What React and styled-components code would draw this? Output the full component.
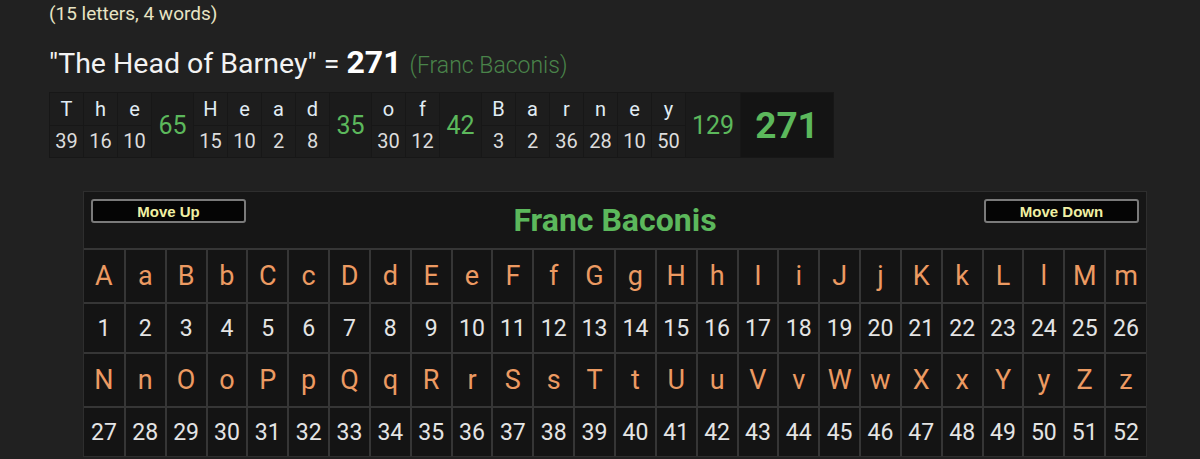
import React from "react";
import styled, { createGlobalStyle } from "styled-components";

const GlobalStyle = createGlobalStyle`
  html, body {
    margin: 0;
    padding: 0;
    background: #212121;
  }
  body {
    font-family: Roboto, "Noto Sans", "Liberation Sans", sans-serif;
    color: #e6e6e6;
  }
`;

const Page = styled.div`
  width: 1200px;
  height: 459px;
  overflow: hidden;
  padding: 2px 0 0 49px;
  box-sizing: border-box;
`;

const Count = styled.div`
  font-size: 19px;
  line-height: 24px;
  color: #e8e4c4;
`;

const Equation = styled.div`
  margin-top: 21px;
  font-size: 28.5px;
  line-height: 30px;
  color: #f2f2f2;
  display: flex;
  align-items: baseline;
  white-space: pre;
`;

const Total = styled.b`
  font-size: 32px;
  font-weight: 700;
  color: #ffffff;
  margin-left: 7px;
`;

const Cipher = styled.span`
  font-size: 23px;
  font-weight: 300;
  color: #4a844a;
  margin-left: 8px;
`;

const Breakdown = styled.table`
  margin-top: 11px;
  border-collapse: separate;
  border-spacing: 1px;
  background: #171717;
  height: 66px;
`;

const LetterCell = styled.td`
  width: 33px;
  height: 31px;
  padding: 0;
  text-align: center;
  background: #1d1d1d;
  color: ${(p) => (p.num ? "#dcdcdc" : "#e0ecf4")};
  font-size: 20px;
  vertical-align: middle;
`;

const SumCell = styled.td`
  width: ${(p) => p.w}px;
  padding: 0;
  text-align: center;
  background: #1b1b1b;
  color: #5cb85c;
  font-size: 25px;
`;

const GrandCell = styled.td`
  width: 92px;
  padding: 0;
  text-align: center;
  background: #141414;
  color: #5cb85c;
  font-size: 37px;
  font-weight: 700;
`;

const Panel = styled.div`
  margin: 33px 0 0 34px;
  width: 1064px;
  background: #161616;
  border: 1px solid #2e2e2e;
  box-sizing: border-box;
`;

const PanelHead = styled.div`
  height: 56px;
  display: grid;
  grid-template-columns: 155px 1fr 155px;
  align-items: start;
  padding: 7px 7px 0;
  box-sizing: border-box;
`;

const MoveButton = styled.button`
  height: 24px;
  background: #050505;
  border: 2px solid #7a7a7a;
  border-radius: 3px;
  color: #f0f0a4;
  font-family: "Liberation Sans", Arial, sans-serif;
  font-weight: 700;
  font-size: 15px;
  padding: 0;
`;

const Title = styled.div`
  text-align: center;
  color: #5cb85c;
  font-weight: 700;
  font-size: 32px;
  line-height: 34px;
  margin-top: 4px;
`;

const Grid = styled.table`
  width: 100%;
  border-collapse: collapse;
  table-layout: fixed;
`;

const GridCell = styled.td`
  height: ${(p) => (p.letter ? 52 : 48)}px;
  padding: 0;
  text-align: center;
  border: 2px solid #363636;
  background: #141414;
  color: ${(p) => (p.letter ? "#ec9a62" : "#e4e4e4")};
  font-size: ${(p) => (p.letter ? 27 : 23)}px;
  border-left: ${(p) => (p.first ? "none" : "2px solid #363636")};
  border-right: ${(p) => (p.last ? "none" : "2px solid #363636")};
  border-bottom: ${(p) => (p.bottom ? "none" : "2px solid #363636")};
`;

const words = [
  { letters: [["T", 39], ["h", 16], ["e", 10]], sum: 65, w: 41 },
  { letters: [["H", 15], ["e", 10], ["a", 2], ["d", 8]], sum: 35, w: 41 },
  { letters: [["o", 30], ["f", 12]], sum: 42, w: 41 },
  { letters: [["B", 3], ["a", 2], ["r", 36], ["n", 28], ["e", 10], ["y", 50]], sum: 129, w: 54 },
];

const alphabet = [];
for (let i = 0; i < 26; i++) {
  alphabet.push(String.fromCharCode(65 + i));
  alphabet.push(String.fromCharCode(97 + i));
}

const halves = [alphabet.slice(0, 26), alphabet.slice(26)];

export default function App() {
  return (
    <Page>
      <GlobalStyle />
      <Count>(15 letters, 4 words)</Count>
      <Equation>
        "The Head of Barney" =<Total>271</Total>
        <Cipher>(Franc Baconis)</Cipher>
      </Equation>
      <Breakdown>
        <tbody>
          <tr>
            {words.map((wd, wi) => (
              <React.Fragment key={wi}>
                {wd.letters.map(([ch], li) => (
                  <LetterCell key={li}>{ch}</LetterCell>
                ))}
                <SumCell rowSpan={2} w={wd.w}>{wd.sum}</SumCell>
              </React.Fragment>
            ))}
            <GrandCell rowSpan={2}>271</GrandCell>
          </tr>
          <tr>
            {words.map((wd, wi) =>
              wd.letters.map(([, v], li) => (
                <LetterCell key={wi + "-" + li} num>
                  {v}
                </LetterCell>
              ))
            )}
          </tr>
        </tbody>
      </Breakdown>
      <Panel>
        <PanelHead>
          <MoveButton>Move Up</MoveButton>
          <Title>Franc Baconis</Title>
          <MoveButton>Move Down</MoveButton>
        </PanelHead>
        <Grid>
          <tbody>
            {halves.map((row, hi) => (
              <React.Fragment key={hi}>
                <tr>
                  {row.map((ch, i) => (
                    <GridCell key={i} letter first={i === 0} last={i === 25}>
                      {ch}
                    </GridCell>
                  ))}
                </tr>
                <tr>
                  {row.map((ch, i) => (
                    <GridCell key={i} first={i === 0} last={i === 25} bottom={hi === 1}>
                      {hi * 26 + i + 1}
                    </GridCell>
                  ))}
                </tr>
              </React.Fragment>
            ))}
          </tbody>
        </Grid>
      </Panel>
    </Page>
  );
}
